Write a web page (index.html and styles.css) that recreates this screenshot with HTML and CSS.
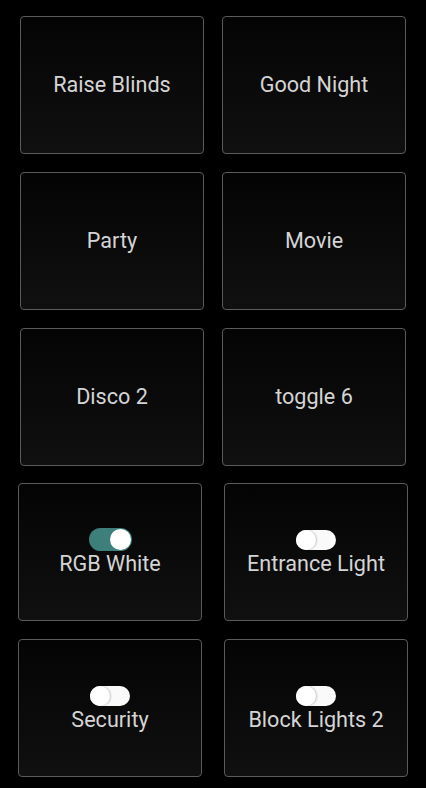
FILE: index.html
```html
<!DOCTYPE html>
<html>
<head>
<meta charset="utf-8">
<link rel="stylesheet" href="styles.css">
</head>
<body>
<div class="page">
  <div class="grid grid-scenes">
    <div class="card"><span class="label">Raise Blinds</span></div>
    <div class="card"><span class="label">Good Night</span></div>
    <div class="card"><span class="label">Party</span></div>
    <div class="card"><span class="label">Movie</span></div>
    <div class="card"><span class="label">Disco 2</span></div>
    <div class="card"><span class="label">toggle 6</span></div>
  </div>
  <div class="grid grid-switches">
    <div class="card">
      <span class="toggle toggle-on"><span class="knob"></span></span>
      <span class="label">RGB White</span>
    </div>
    <div class="card">
      <span class="toggle toggle-off"><span class="knob"></span></span>
      <span class="label">Entrance Light</span>
    </div>
    <div class="card">
      <span class="toggle toggle-off"><span class="knob"></span></span>
      <span class="label">Security</span>
    </div>
    <div class="card">
      <span class="toggle toggle-off"><span class="knob"></span></span>
      <span class="label">Block Lights 2</span>
    </div>
  </div>
</div>
</body>
</html>
```
FILE: styles.css
```css
html, body {
  margin: 0;
  padding: 0;
  background: #000;
}
body {
  font-family: Roboto, "Noto Sans", sans-serif;
  color: #d4d4d4;
}
.page {
  padding-top: 16px;
  display: flex;
  flex-direction: column;
  gap: 17px;
}
.grid {
  display: grid;
  grid-template-columns: 184px 184px;
  grid-auto-rows: 138px;
  row-gap: 18px;
}
.grid-scenes {
  padding: 0 20px;
  column-gap: 18px;
}
.grid-switches {
  padding: 0 18px;
  column-gap: 22px;
}
.card {
  box-sizing: border-box;
  border: 1px solid #5a5a5a;
  border-radius: 4px;
  background: linear-gradient(to bottom, #040404 0%, #101010 100%);
  display: flex;
  flex-direction: column;
  align-items: center;
  justify-content: center;
}
.label {
  font-size: 21.6px;
  line-height: 26px;
  color: #d4d4d4;
  white-space: nowrap;
}
.toggle {
  position: relative;
  display: block;
  border-radius: 12px;
}
.toggle-on {
  width: 43px;
  height: 23px;
  background: #3f7f7b;
}
.toggle-on .knob {
  position: absolute;
  right: 1px;
  top: 1px;
  width: 21px;
  height: 21px;
  border-radius: 50%;
  background: #fff;
}
.toggle-off {
  width: 40px;
  height: 20px;
  margin-top: 2px;
  margin-bottom: 1px;
  background: #fafafa;
}
.toggle-off .knob {
  position: absolute;
  left: 0;
  top: 0;
  width: 20px;
  height: 20px;
  border-radius: 50%;
  background: #fff;
  box-shadow: 1px 0 2px rgba(0, 0, 0, 0.22);
}
```
